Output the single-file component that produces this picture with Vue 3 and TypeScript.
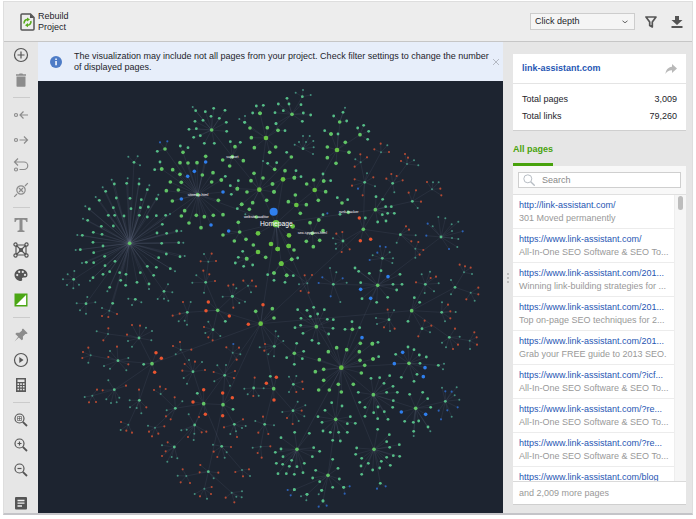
<script setup lang="ts">
import { ref } from 'vue'

interface Dot { x: number; y: number; kind: string }
interface Line { x1: number; y1: number; x2: number; y2: number }
interface Page { url: string; title?: string }

const radius: Record<string, number> = { t: 3, m: 4.2, g: 5.5, G: 7, R: 3.2, O: 5.2, b: 3.2, B: 5.4, H: 11, S: 12 }

// One hub per line: position, kind, then its satellites; a letter sets the kind of the dots after it.
const northWest = `
485,144 g m 437,86 466,89 491,79 525,85 483,103 459,115 435,118 417,142 439,140 529,121 530,148 451,161 431,166 463,184 493,184 508,109 t 428,75
648,168 G g 630,94 600,138 652,137 604,167 613,197 677,195 659,211 m 584,121 684,145
584,121 m t 568,111 585,102
630,94 g m 619,72 640,70 608,93
547,224 g m 541,179 571,181 g 555,194 518,234 580,236 539,252
345,201 g m 322,208 b 330,181 352,178
399,211 g m 391,192 414,197
443,338 g g 467,223 390,242 414,243 441,242 368,263 390,277 335,261 457,279 489,272 361,300 394,301 349,326 385,324 367,357 485,300 514,294 505,355 404,386 394,402 417,423 439,400 463,404 490,400 519,398 453,437 B 467,240 433,268 413,283 394,351 519,330 483,429
335,261 g m 330,240 314,263
514,294 g m 526,283
252,241 m t 235,224 263,223 270,250
239,484 g m 230,304 267,306 193,306 167,328 148,355 118,381 199,348 240,349 274,353 292,323 320,351 190,377 243,380 271,377 295,375 175,400 194,400 222,402 268,400 292,405 319,401 347,400 113,415 154,433 190,432 337,427 130,451 97,460 156,457 321,453 350,454 380,447 129,481 159,492 335,484 386,482 91,503 131,512 164,523 349,516 390,524 109,541 131,542 195,538 326,527 292,553 319,556 361,560 165,551 159,577 179,569 209,572 228,577 271,572 311,580 129,587 212,595 261,601 227,610 179,616 297,606 t 233,289 185,293 268,290 158,316 298,310 137,345 325,338 106,373 99,410 360,396 82,459 394,447 77,504 400,482 404,522 96,543 120,596 172,628 297,621 375,568
71,592 m t 73,567 53,577 39,592 87,608 51,609 70,619
342,628 m t 354,607 367,631 323,651 342,650 355,656
628,323 G g 612,274 603,296 639,288 667,306 672,330 650,355 608,362 591,330 562,320 575,367 598,382
562,320 g m 565,296 544,337 541,311
575,367 g m 562,380
674,262 g m 653,244 680,242 t 639,237
619,405 g t 586,397
569,450 g g 565,421 519,459 553,477 588,472 B 536,447
624,510 G g 610,489 590,530 647,526
590,530 g m 578,508 565,526 556,543 581,553 608,549
475,539 t R 485,515 452,538 498,537 t 462,516
467,601 m t 439,580 427,602 462,632 R 460,566 478,577 495,597
547,643 m t 559,619 518,644 R 535,611 550,608
594,611 t R 580,596 606,596 618,613 t 603,631
672,573 g m 690,545 653,578 672,595
678,424 G G 624,454 663,486 683,501`

const northEast = `
66,97 g m 25,66 51,49 57,66 93,68 40,86 15,92 100,93 122,99 97,118 18,125
97,44 m t 77,32 99,24 122,39
24,145 g m 45,146 18,125
99,200 m t 87,180 99,162 119,162 108,180 130,177 131,196 129,216 74,188
64,225 g m 50,211
209,120 g m 191,102 219,91 230,117 t 225,77
201,204 G g 183,156 226,181 237,211 172,195 172,227 198,244 m 204,156
183,156 g m 164,146
270,158 g m 263,138 281,130 296,148 293,172
333,211 t t 352,190 R 332,185 313,202 357,210
272,241 t R 271,217 291,226 254,254 t 256,232
411,246 t t 432,235 445,250 R 405,216 414,227 393,237
284,301 m t 291,274 315,313 R 310,286 246,311 278,340 254,292 b 264,320
368,304 m R 364,276 380,282 349,290 398,295 t 373,331
427,358 m R 416,332 438,325 453,359 t 443,378
486,322 t R 471,300 511,320 514,340 t 489,301 506,301
39,292 G g 45,266 73,287 8,306 12,329
73,287 g m 78,266 93,284
134,324 G g 110,306 131,294 161,297 167,329 145,355
161,297 g m 159,276 182,296
79,369 G g 76,339 55,359 109,368 91,394
216,363 g m 202,347 233,353
235,391 g m 210,397
127,454 g g 120,422 146,414 109,478 130,494 149,475 159,446
146,414 g m 159,398 b 172,394
316,383 g m 318,344 338,352 347,374 364,374 337,398 353,394 373,394 348,417 323,420
280,442 g O 268,408 271,476 302,472 m 286,408
219,477 m t 189,469 197,485 198,500 R 199,455 217,450 239,502 215,510
391,458 m R 408,433 417,443 424,478 t 437,460 380,482
436,500 t R 445,480 460,504 449,518 t 436,527
513,465 m t 505,405 526,409 545,427 565,419 546,447 546,468 565,471 562,495 488,433 b 473,425 469,461 578,448 537,501
337,529 m b 330,493 322,512 347,495 299,534 t 359,511 369,529 367,543 308,520
18,424 G G 68,433 57,460 56,492 23,501 34,545
56,492 G g 72,504
34,545 G g 65,532 12,573 50,580
65,532 g m 83,528
50,580 g m 70,581 45,601
112,604 t R 104,580 126,579 92,627 116,632 t 87,607
190,607 m t 180,558 199,571 230,602 211,660 b 157,586 146,603 218,589 182,643
323,610 g m 255,558 266,568 298,574 333,566 390,577 369,607 396,607 380,624 272,602 353,646 276,650 320,661 B 354,584 272,622 302,649
466,607 m t 480,569 455,577 506,604 492,628 464,633 R 482,588 498,584 438,601
582,571 t R 569,548 585,553 602,557 t 606,576
555,616 m t 543,594 543,637
602,632 t R 625,617 625,637 589,652 t 614,656`

const southWest = `
108,35 m t 80,34 112,15 136,31 90,55 108,65
178,56 t m 188,34 t 156,48 R 156,72 175,75 201,66
256,22 m t 235,20 246,39 274,31
412,61 m R 399,30 368,71 389,65 t 422,30 386,88 404,86 411,98
503,55 g O 475,30 468,56 538,72 m 526,88
547,13 m t 568,33 585,29 R 550,47
632,95 G g 617,58 667,50 672,78 O 639,38 595,97
489,113 m t 475,89 466,123 511,132 R 462,105 475,136 488,145
267,138 m R 246,99 270,101 231,128 t 288,107 306,117 304,145 234,147 246,164
174,126 t R 175,109 160,145 t 140,118
122,190 t R 115,167 99,180 97,198 t 115,212
204,206 m R 201,164 175,195 235,217 t 180,177 235,198 162,222 180,230 229,235
306,215 g O 318,182 334,199 314,241 m 281,217
392,173 t R 390,150 369,162 424,173 t 377,187
429,239 m R 404,216 435,209 397,236 465,234 t 417,204 456,210 401,258 411,275
524,250 m t 502,220 528,219 493,268 540,281 R 491,240 555,237 552,258
548,182 t R 529,166 567,167 560,203 t 571,187 b 550,156
673,163 m t 677,118 685,133 629,166 700,147 655,187 672,193 R 645,156 643,176
193,293 m t 175,265 169,322 183,333 200,331 208,317 R 158,295 228,281
127,311 t t 104,315 R 117,331 138,330 141,293
268,325 m R 267,293 289,346 t 239,325 240,346 260,348 274,364
332,306 t R 330,284 312,294 347,291
376,349 m R 374,316 348,373 362,382 t 397,328 350,355
461,335 g O 461,293 429,330 466,367 m 442,304
519,338 g O 518,303 547,317 518,371 m 549,352
235,398 t R 213,390 246,422 229,416 t 212,414
315,407 t t 294,401 R 297,419 325,425 306,433 343,403
434,399 m t 416,367 394,415 410,413 433,425 431,444 R 455,421 469,419 414,435 447,375
553,397 m t 541,426 587,402 558,418 576,408 R 579,382 522,406 561,435
611,288 m R 614,257 610,312 t 583,290 593,307 626,311 641,289
671,290 g O 649,274 679,256 672,324 m 661,253
644,397 m R 639,374 625,422 655,426 t 616,387 672,400
632,464 t t 608,467 R 661,463 623,483 635,497
373,465 m R 353,451 336,492 347,478 t 336,460 365,495 382,499 352,509
515,463 m t 489,458 530,481 524,497 R 543,465 491,479 502,495
475,539 m R 451,519 505,542 449,541 t 491,559
409,552 t t 383,551 R 398,532 392,571 420,573
576,534 t R 556,540 597,532 579,553 t 600,552
463,590 t t 434,606 471,620 R 485,585 483,606 450,613
545,602 t t 576,598 559,614 575,616 R 527,617 553,631`

const southEast = `
139,104 g m 83,53 111,55 131,46 163,53 143,66 121,73 93,79 75,107 92,100 99,124 172,82 190,83 189,109 176,126 126,145 146,154
247,112 g m 246,89 269,107 225,112
214,227 G g 200,167 230,173 175,179 148,203 136,239 161,232 161,265 146,294 178,294 205,277 214,300 250,277 274,243 284,220 270,205 268,179 271,154 307,155 309,201 B 276,137
307,155 g m 324,151
309,201 g m 326,194
73,184 g m 80,154 101,178 97,200 73,217 50,197
70,277 m t 57,254 79,252 57,300 R 97,269 99,291 79,300
69,356 m t 83,329 106,340 37,360 86,387 103,373 R 95,356 51,378 68,396
310,308 g m 303,259 329,257 359,251 342,274 369,283 265,301 269,331 350,301 382,301 370,326 285,346 324,345 311,362 343,359 368,346 285,373 323,380 354,382
417,214 g m 414,165 432,173 448,189 469,195 377,187 450,214 441,247 394,256 432,268 B 398,181 373,215 465,227 460,254
505,220 m t 522,215 519,232
437,349 g m 419,307 458,301 473,320 482,346 404,388 430,391 446,387 474,405 431,418 B 394,360 467,367 t 481,418 431,432
526,328 m b 526,298 545,299 563,346 506,356 532,355 513,382 t 516,287 560,286 568,323 554,310 545,374
197,382 g m 185,332 216,342 165,355 144,374 156,391 159,417 181,421 206,421 232,421 232,395 256,394 241,374 188,445 211,447
81,472 g m 74,421 118,424 33,437 33,471 16,481 39,494 19,514 38,517 65,505 58,523 81,524 103,514 24,545 49,545 73,547 99,542 127,494 149,478 131,467
312,472 g m 323,412 358,428 350,449 359,466 388,458 370,491 389,493 350,496 334,508 361,520 329,528 308,534 275,547 273,522 295,514 275,499 257,487 260,468
174,550 g m 188,502 204,529 137,535 128,558 149,569 208,561 188,586 221,586 155,595 111,607 73,593 159,627
73,593 m b 53,594 62,610
221,586 m b 239,583 224,605
159,627 m b 146,644 170,641
111,607 m t 93,613 109,625
155,595 m t 146,607
331,574 m b 321,590 347,583
425,56 g m 433,17 449,31 414,88
515,61 m t 516,31 557,60 525,88 R 534,38 541,58 541,79
357,83 m R 353,53 342,106 374,110 t 372,55 318,78 321,96 360,117
456,110 m R 464,86 484,101 445,133 t 480,121
538,136 m R 555,110 564,158 549,171 t 569,134 516,152 528,166
599,146 t R 613,121 620,136 621,158 t 600,171`

// Chains of hubs joined to one another.
const trunks = `
678,424 443,338 345,201
443,338 399,211
678,424 628,323 547,224 485,144
628,323 724,225
648,168 726,97 757,44
628,323 648,168
678,424 699,292
678,424 739,369 794,324 861,204 870,120
861,204 930,158
678,424 976,383 1028,304 1071,246
678,424 632,725
678,424 787,454
678,424 874,857
678,424 569,450
694,545 772,604
443,338 239,484 252,241
239,484 71,592
239,484 108,665
239,484 188,664
239,484 342,628
239,484 178,686
632,725 940,442 944,301 932,241
944,301 993,211
976,383 940,442
976,383 1087,358 1146,322
940,442 1051,458 1096,500
940,442 879,477
632,725 306,845
632,725 503,685
632,725 461,965
632,725 519,968
632,725 671,920
632,725 1085,686
503,685 412,691
503,685 467,601 475,539
503,685 489,743
503,685 547,643 594,611
306,845 267,768 174,756
306,845 204,836 122,820
306,845 193,923 127,941
306,845 268,955 235,1028
461,965 429,869 392,803
461,965 376,979 332,936
376,979 315,1037
461,965 434,1029 373,1095
461,965 515,1093 576,1164
461,965 519,968 524,880 548,812
519,968 553,1027
519,968 475,1169 409,1182
475,1169 463,1220
475,1169 545,1232
671,920 644,1027 632,1094
671,920 729,986
671,920 611,918
632,725 673,793
874,857 983,610 1173,465
983,610 850,607
983,610 997,529
874,857 799,734
874,857 733,814 632,725
874,857 907,742
874,857 1077,844 1165,850
874,857 970,938 1097,979 1186,958
874,857 857,1012 834,1180
874,857 741,1102
874,857 972,1102 991,1204
1085,686 1175,691
1085,686 1198,766 1259,776
1085,686 1116,740
1085,686 1215,616 1262,632
1215,616 1242,571
1085,686 1126,607`

const dots: Dot[] = []
const lines: Line[] = []

function plot(source: string, dx: number, dy: number): void {
  for (const row of source.trim().split('\n')) {
    const [centre, centreKind, ...rest] = row.trim().split(' ')
    const [cx, cy] = centre.split(',').map(Number)
    let kind = centreKind
    for (const part of rest) {
      if (!part.includes(',')) {
        kind = part
        continue
      }
      const [x, y] = part.split(',').map(Number)
      dots.push({ x: x + dx, y: y + dy, kind })
      lines.push({ x1: cx + dx, y1: cy + dy, x2: x + dx, y2: y + dy })
    }
    dots.push({ x: cx + dx, y: cy + dy, kind: centreKind })
  }
}

plot(northWest, 0, 0)
plot(northEast, 660, 0)
plot(southWest, 0, 630)
plot(southEast, 660, 630)
dots.push({ x: 671, y: 389, kind: 'S' }, { x: 678, y: 425, kind: 'H' })

for (const row of trunks.trim().split('\n')) {
  const stops = row.split(' ').map((stop) => stop.split(',').map(Number))
  for (let i = 1; i < stops.length; i++) {
    lines.push({ x1: stops[i - 1][0], y1: stops[i - 1][1], x2: stops[i][0], y2: stops[i][1] })
  }
}

const labels = [
  { x: 547, y: 228, text: 'support' },
  { x: 444, y: 342, text: 'sitemap.html' },
  { x: 619, y: 409, text: 'website-auditor' },
  { x: 896, y: 394, text: 'rank-tracker' },
  { x: 787, y: 456, text: 'seo-spyglass.html' },
]

const pages: Page[] = [
  { url: 'http://link-assistant.com/', title: '301 Moved permanently' },
  { url: 'https://www.link-assistant.com/', title: 'All-In-One SEO Software & SEO To...' },
  { url: 'https://www.link-assistant.com/201...', title: 'Winning link-building strategies for ...' },
  { url: 'https://www.link-assistant.com/201...', title: 'Top on-page SEO techniques for 2...' },
  { url: 'https://www.link-assistant.com/201...', title: 'Grab your FREE guide to 2013 SEO.' },
  { url: 'https://www.link-assistant.com/?icf...', title: 'All-In-One SEO Software & SEO To...' },
  { url: 'https://www.link-assistant.com/?re...', title: 'All-In-One SEO Software & SEO To...' },
  { url: 'https://www.link-assistant.com/?re...', title: 'All-In-One SEO Software & SEO To...' },
  { url: 'https://www.link-assistant.com/blog' },
]

const metric = ref('Click depth')
const query = ref('')
const notice = ref(true)
</script>

<template>
  <div class="window">
    <header class="topbar">
      <button class="rebuild" type="button">
        <svg width="15" height="18" viewBox="0 0 15 18" fill="none">
          <path d="M2 1h8.5L14 4.500V16a1 1 0 0 1-1 1H2a1 1 0 0 1-1-1V2a1 1 0 0 1 1-1z" stroke="#555" stroke-width="1.500" />
          <path d="M10 1v4h4z" fill="#555" />
          <path d="M4.200 10.500a3.300 3.300 0 0 1 3.500-4M10.800 8a3.300 3.300 0 0 1-3.500 4.200" stroke="#5aab1e" stroke-width="1.600" />
          <path d="M7 4.500l3 2-3 2zM8 10l-3 2.200 3 2z" fill="#5aab1e" />
        </svg>
        <span>Rebuild<br />Project</span>
      </button>
      <div class="top-actions">
        <div class="select-wrap">
          <select v-model="metric" aria-label="Size nodes by">
            <option>Click depth</option>
          </select>
          <svg width="6" height="4" viewBox="0 0 6 4" fill="none" stroke="#666"><path d="M.5.8L3 2.800 5.500.8" /></svg>
        </div>
        <button type="button" aria-label="Filter">
          <svg width="12" height="12" viewBox="0 0 12 12"><path d="M1 1h10L7.300 6v5L4.700 9.500V6z" fill="none" stroke="#555" stroke-width="1.700" stroke-linejoin="round" /></svg>
        </button>
        <button type="button" aria-label="Download">
          <svg width="12" height="13" viewBox="0 0 12 13" fill="#555"><path d="M4 1h4v4h3.500L6 10 .5 5H4zM.5 11h11v2H.5z" /></svg>
        </button>
      </div>
    </header>

    <div class="body">
      <nav class="tools" aria-label="Graph tools">
        <button type="button" aria-label="Add page">
          <svg viewBox="0 0 16 16" class="line"><circle cx="8" cy="8" r="6.500" /><path d="M8 4.500v7M4.500 8h7" /></svg>
        </button>
        <button type="button" aria-label="Delete">
          <svg viewBox="0 0 16 16" fill="#8c8c8c"><path d="M3.500 4.500h9V14a.8.8 0 0 1-.8.800H4.300a.8.8 0 0 1-.8-.8zM3 2.200h3l.6-.8h2.800l.6.8h3v1.500H3z" /></svg>
        </button>
        <hr />
        <button type="button" aria-label="Incoming links">
          <svg viewBox="0 0 16 16" class="line pale"><circle cx="3" cy="8" r="1.500" /><path d="M15 8H7.500M10.500 4.500L7 8l3.500 3.500" /></svg>
        </button>
        <button type="button" aria-label="Outgoing links">
          <svg viewBox="0 0 16 16" class="line pale"><circle cx="3" cy="8" r="1.500" /><path d="M6.500 8H14M11 4.500L14.500 8 11 11.500" /></svg>
        </button>
        <button type="button" aria-label="Redirect">
          <svg viewBox="0 0 16 16" class="line pale"><circle cx="3" cy="12.500" r="1.500" /><path d="M6.500 12.500H11a3.700 3.700 0 0 0 0-7.500H2M5 1.500L1.500 5 5 8.500" /></svg>
        </button>
        <button type="button" aria-label="Remove link">
          <svg viewBox="0 0 16 16" class="line pale"><circle cx="8" cy="8" r="4.200" /><path d="M6 6l4 4M10 6l-4 4M12 4l2.800-2.800M1.200 14.800L4 12" /></svg>
        </button>
        <hr />
        <button type="button" aria-label="Labels">
          <svg viewBox="0 0 16 16" fill="#8c8c8c"><path d="M1.500 1h13v4h-1.200c-.3-1.500-.8-2.200-2.300-2.200H9.500v9.700c0 .8.400 1 2 1.200V15h-7v-1.300c1.600-.2 2-.4 2-1.200V2.800H5c-1.500 0-2 .7-2.300 2.200H1.500z" /></svg>
        </button>
        <button type="button" aria-label="Arrange nodes">
          <svg viewBox="0 0 16 16" class="line"><path d="M3 3h10v10H3zM3 3l10 10M13 3L3 13" /><g fill="#e6e6e6"><circle cx="2.500" cy="2.500" r="1.600" /><circle cx="13.500" cy="2.500" r="1.600" /><circle cx="2.500" cy="13.500" r="1.600" /><circle cx="13.500" cy="13.500" r="1.600" /></g><circle cx="8" cy="8" r="1.500" fill="#555" /></svg>
        </button>
        <button type="button" aria-label="Colors">
          <svg viewBox="0 0 16 16" fill="#555"><path fill-rule="evenodd" d="M8 2C4.400 2 1.500 4.700 1.500 8s2.900 6 6.500 6c.9 0 1.400-.7 1.200-1.400-.5-1.300 0-2.100 1.300-2.100h1.700c1.500 0 2.300-1.100 2.300-2.700C14.500 4.500 11.600 2 8 2zM4.200 9.200a1.100 1.100 0 1 1 0-2.200 1.100 1.100 0 0 1 0 2.200zM6.200 6a1.100 1.100 0 1 1 0-2.200 1.100 1.100 0 0 1 0 2.200zM9.800 6a1.100 1.100 0 1 1 0-2.200 1.100 1.100 0 0 1 0 2.200zM12 9a1.100 1.100 0 1 1 0-2.200A1.100 1.100 0 0 1 12 9z" /></svg>
        </button>
        <button type="button" aria-label="Contrast">
          <svg viewBox="0 0 16 16"><path d="M2.200 2.200h11.600v11.600H2.200z" fill="#fff" stroke="#4ba614" stroke-width="1.400" /><path d="M2 2h12L2 14z" fill="#4ba614" /></svg>
        </button>
        <hr />
        <button type="button" aria-label="Pin">
          <svg viewBox="0 0 16 16" fill="#8c8c8c"><path d="M10 1.500l4.700 4.700-1.300.9-1-.2-2.500 2.600.1 2.800-1.300 1L5.800 10.500 1.500 14.500l3.700-4.800-2.900-2.800 1.200-1.200 2.900.1L9 3.500 8.900 2.600z" /></svg>
        </button>
        <button type="button" aria-label="Play">
          <svg viewBox="0 0 16 16" class="line"><circle cx="8" cy="8" r="6.500" /><path d="M6.300 5l4.200 3-4.200 3z" fill="#555" stroke="none" /></svg>
        </button>
        <button type="button" aria-label="Calculate">
          <svg viewBox="0 0 16 16"><path d="M3 1h10v14H3z" fill="#5a5a5a" /><path d="M4.500 2.500h7v2.500h-7zM4.500 6.300h1.600v1.600H4.500zM7.200 6.300h1.600v1.600H7.200zM9.900 6.300h1.600v1.600H9.900zM4.500 9h1.600v1.600H4.500zM7.200 9h1.600v1.600H7.200zM9.900 9h1.600v1.600H9.900zM4.500 11.700h1.600v1.600H4.500zM7.200 11.700h1.600v1.600H7.200zM9.900 11.700h1.600v1.600H9.900z" fill="#e6e6e6" /></svg>
        </button>
        <hr />
        <button type="button" aria-label="Fit to screen">
          <svg viewBox="0 0 16 16" class="line"><circle cx="6.500" cy="6.500" r="4.500" /><path d="M4.500 8.500v-4h4v4zM4.500 6.500h4M6.500 4.500v4" stroke-width=".6" /><path d="M9.800 9.800l4.200 4.200" stroke-width="1.800" /></svg>
        </button>
        <button type="button" aria-label="Zoom in">
          <svg viewBox="0 0 16 16" class="line"><circle cx="6.500" cy="6.500" r="4.500" /><path d="M4.500 6.500h4M6.500 4.500v4" /><path d="M9.800 9.800l4.200 4.200" stroke-width="1.800" /></svg>
        </button>
        <button type="button" aria-label="Zoom out">
          <svg viewBox="0 0 16 16" class="line"><circle cx="6.500" cy="6.500" r="4.500" /><path d="M4.500 6.500h4" /><path d="M9.800 9.800l4.200 4.200" stroke-width="1.800" /></svg>
        </button>
        <button type="button" aria-label="Notes" class="last">
          <svg viewBox="0 0 16 16"><rect x="2" y="2" width="12" height="12.500" rx="1" fill="#555" /><path d="M4.500 5.500h7M4.500 8.200h7M4.500 11h4.500" stroke="#eee" stroke-width="1.300" /></svg>
        </button>
      </nav>

      <main class="stage">
        <div v-if="notice" class="notice" role="status">
          <svg class="info" width="12" height="12" viewBox="0 0 12 12"><circle cx="6" cy="6" r="6" fill="#4e7cc6" /><path d="M5.300 5h1.500v4.200H5.300zM5.300 2.600h1.500v1.500H5.300z" fill="#fff" /></svg>
          <p>The visualization may include not all pages from your project. Check filter settings to change the number<br />of displayed pages.</p>
          <button type="button" aria-label="Close" @click="notice = false">
            <svg width="8" height="8" viewBox="0 0 8 8" stroke="#b5bac4"><path d="M1 1l6 6M7 1L1 7" /></svg>
          </button>
        </div>
        <div class="graph">
          <svg viewBox="-36 -3 1395 1296" role="img" aria-label="Site structure">
            <line v-for="(l, i) in lines" :key="'l' + i" :x1="l.x1" :y1="l.y1" :x2="l.x2" :y2="l.y2" />
            <circle v-for="(d, i) in dots" :key="'d' + i" :cx="d.x" :cy="d.y" :r="radius[d.kind]" :class="'k-' + d.kind" />
            <text v-for="l in labels" :key="l.text" :x="l.x" :y="l.y">{{ l.text }}</text>
            <text class="home" x="679" y="431">Homepage</text>
          </svg>
        </div>
      </main>

      <div class="grip"><i></i><i></i><i></i></div>

      <aside class="side">
        <section class="card">
          <div class="site">
            <a href="#">link-assistant.com</a>
            <button type="button" aria-label="Share">
              <svg width="12" height="12" viewBox="0 0 12 12" fill="#b9b9b9"><path d="M7 1l5 4.500L7 10V7.300C4 7.200 2 8.500.5 11 .8 7 3 4 7 3.700z" /></svg>
            </button>
          </div>
          <dl>
            <div><dt>Total pages</dt><dd>3,009</dd></div>
            <div><dt>Total links</dt><dd>79,260</dd></div>
          </dl>
        </section>
        <button type="button" class="tab">All pages</button>
        <section class="list">
          <div class="search">
            <label>
              <svg width="12" height="12" viewBox="0 0 12 12" fill="none" stroke="#b7bdc4"><circle cx="4.800" cy="4.800" r="4" /><path d="M7.700 7.700l4 4" stroke-width="1.300" /></svg>
              <input v-model="query" type="text" placeholder="Search" aria-label="Search pages" />
            </label>
          </div>
          <div class="scroll">
            <ul>
              <li v-for="(p, i) in pages" :key="i">
                <a href="#">{{ p.url }}</a>
                <span v-if="p.title">{{ p.title }}</span>
              </li>
            </ul>
            <div class="track"><i></i></div>
          </div>
          <footer>and 2,009 more pages</footer>
        </section>
      </aside>
    </div>
  </div>
</template>

<style>
body {
  margin: 0;
  background: #fff;
}
</style>

<style scoped>
* {
  box-sizing: border-box;
}
.window {
  height: calc(100vh - 5px);
  margin: 1px 3px 4px;
  display: flex;
  flex-direction: column;
  background: #e6e6e6;
  border: 1px solid #dedede;
  border-bottom: 2px solid #c4c4c8;
  font: 9px/11px "Liberation Sans", Arial, sans-serif;
  color: #1d1d2b;
}
button {
  display: flex;
  align-items: center;
  padding: 0;
  border: 0;
  background: none;
  font: inherit;
  color: inherit;
}
svg {
  display: block;
}
a {
  color: #1f56b3;
  text-decoration: none;
}
.topbar {
  flex: none;
  display: flex;
  align-items: center;
  justify-content: space-between;
  height: 40px;
  padding: 0 9px 0 16px;
  background: #ededed;
  border-bottom: 1px solid #c6c6c6;
}
.rebuild {
  gap: 3px;
  text-align: left;
}
.top-actions {
  display: flex;
  align-items: center;
  gap: 14px;
}
.top-actions svg {
  flex: none;
}
.select-wrap {
  display: grid;
  align-items: center;
  width: 105px;
  margin-right: -4px;
}
.select-wrap select,
.select-wrap svg {
  grid-area: 1 / 1;
}
.select-wrap select {
  appearance: none;
  height: 17px;
  padding: 0 4px;
  border: 1px solid #cdcdcd;
  border-radius: 0;
  background: #f5f5f5;
  font: inherit;
  color: inherit;
}
.select-wrap svg {
  justify-self: end;
  margin-right: 7px;
  pointer-events: none;
}
.body {
  flex: 1;
  min-height: 0;
  display: flex;
}
.tools {
  flex: none;
  width: 34px;
  display: flex;
  flex-direction: column;
  align-items: center;
  gap: 9px;
  padding: 5px 0 2px;
}
.tools svg {
  width: 16px;
  height: 16px;
}
.tools hr {
  flex: none;
  width: 17px;
  height: 1px;
  margin: 0;
  border: 0;
  background: #cbcbcb;
}
.tools .last {
  margin-top: auto;
}
.line {
  fill: none;
  stroke: #555;
  stroke-width: 1.2;
}
.line.pale {
  stroke: #8c8c8c;
}
.stage {
  flex: 1;
  min-width: 0;
  display: flex;
  flex-direction: column;
}
.notice {
  flex: none;
  display: flex;
  align-items: center;
  height: 39px;
  padding: 0 3px 0 12px;
  background: #e7eefa;
  white-space: nowrap;
}
.notice p {
  flex: 1;
  min-width: 0;
  margin: 0 0 0 12px;
}
.info {
  flex: none;
}
.graph {
  flex: 1;
  min-height: 0;
  background: #1d2430;
}
.graph svg {
  width: 100%;
  height: 100%;
}
line {
  stroke: #8c9bb4;
  stroke-opacity: 0.15;
  stroke-width: 2;
}
text {
  font-size: 11px;
  fill: #fff;
  text-anchor: middle;
}
text.home {
  font-size: 20px;
}
.k-t { fill: #438d7c; }
.k-m { fill: #56be88; }
.k-g { fill: #61c566; }
.k-G,
.k-H { fill: #67c444; }
.k-R { fill: #b54a33; }
.k-O { fill: #ea5530; }
.k-b { fill: #2c62b8; }
.k-B,
.k-S { fill: #2f7fee; }
.grip {
  flex: none;
  width: 10px;
  display: flex;
  flex-direction: column;
  align-items: center;
  justify-content: center;
  gap: 2px;
}
.grip i {
  width: 2px;
  height: 2px;
  background: #bdbdbd;
}
.side {
  flex: none;
  width: 173px;
  margin-right: 6px;
  padding: 12px 0 8px;
  display: flex;
  flex-direction: column;
}
.card {
  flex: none;
  background: #fff;
  border-bottom: 1px solid #cfcfcf;
}
.site {
  display: flex;
  align-items: center;
  justify-content: space-between;
  height: 30px;
  padding: 0 9px;
  border-bottom: 1px solid #e4e4e4;
  font-weight: bold;
}
dl {
  margin: 0;
  padding: 10px 9px 8px;
  display: grid;
  gap: 6px;
}
dl div {
  display: flex;
  justify-content: space-between;
}
dd {
  margin: 0;
}
.tab {
  flex: none;
  align-self: flex-start;
  align-items: flex-start;
  height: 22px;
  margin-top: 13px;
  border-bottom: 3px solid #48a20c;
  font-weight: bold;
  color: #48a20c;
}
.list {
  flex: 1;
  min-height: 0;
  display: flex;
  flex-direction: column;
  background: #fff;
  border-bottom: 1px solid #cfcfcf;
}
.search {
  flex: none;
  padding: 6px 5px;
  background: #f8f8f8;
  border-bottom: 1px solid #e0e0e0;
}
.search label {
  display: flex;
  align-items: center;
  gap: 3px;
  height: 16px;
  padding-left: 4px;
  background: #fff;
  border: 1px solid #cfcfcf;
}
.search input {
  flex: 1;
  min-width: 0;
  padding: 0 4px;
  border: 0;
  outline: 0;
  background: none;
  font: inherit;
  color: #333;
}
.search input::placeholder {
  color: #888;
}
.scroll {
  flex: 1;
  min-height: 0;
  display: flex;
}
ul {
  flex: 1;
  min-width: 0;
  margin: 0;
  padding: 0;
  overflow: hidden;
  list-style: none;
}
li {
  height: 34px;
  padding: 5px 0 0 6px;
  display: flex;
  flex-direction: column;
  gap: 2px;
  border-bottom: 1px solid #ececec;
  white-space: nowrap;
}
li span,
.list footer {
  color: #999;
}
.track {
  flex: none;
  width: 12px;
  padding: 1px 3px;
  border-left: 1px solid #eee;
  background: #f6f6f6;
}
.track i {
  display: block;
  height: 14px;
  border-radius: 3px;
  background: #bdbdbd;
}
.list footer {
  flex: none;
  height: 23px;
  padding: 6px;
  border-top: 1px solid #dadada;
}
</style>
